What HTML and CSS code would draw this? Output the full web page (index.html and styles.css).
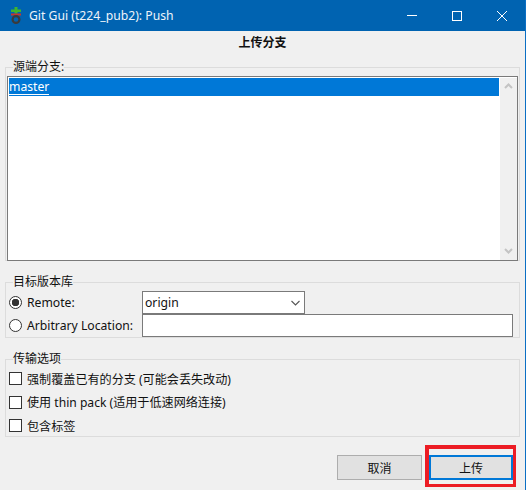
FILE: index.html
```html
<!DOCTYPE html>
<html lang="zh-CN">
  <head>
    <meta charset="UTF-8" />
    <title>Git Gui (t224_pub2): Push</title>
    <link rel="stylesheet" href="styles.css">
  </head>
  <body>
    <div class="window">
      <!-- 标题栏 -->
      <header class="titlebar">
        <svg class="app-icon" width="12" height="17" viewBox="0 0 12 17">
          <path d="M4.500 0h3v2.500H11v2.500H7.500v1.500h-3V5H1V2.500h3.500z" fill="#3fb52c"/>
          <rect x="1" y="6.500" width="10" height="2" fill="#c8352b"/>
          <circle cx="6" cy="12.500" r="3.400" fill="none" stroke="#3b3b3b" stroke-width="2.200"/>
        </svg>
        <span class="title-text">Git Gui (t224_pub2): Push</span>
        <div class="win-controls">
          <svg width="12" height="12" viewBox="0 0 12 12"><path d="M1 5.500h10" stroke="#fff" fill="none"/></svg>
          <svg width="12" height="12" viewBox="0 0 12 12"><rect x="1.500" y="1.500" width="9" height="9" stroke="#fff" fill="none"/></svg>
          <svg width="12" height="12" viewBox="0 0 12 12"><path d="M1 1l10 10M11 1L1 11" stroke="#fff" fill="none"/></svg>
        </div>
      </header>

      <main class="content">
        <h1 class="heading">上传分支</h1>

        <!-- 源端分支 -->
        <fieldset class="group group-source">
          <legend>源端分支:</legend>
          <div class="listbox">
            <div class="list-items">
              <div class="list-row selected"><span>master</span></div>
            </div>
            <div class="scrollbar">
              <svg width="9" height="6" viewBox="0 0 9 6"><path d="M1 5l3.500-3.500L8 5" fill="none" stroke="#c4c4c4" stroke-width="2"/></svg>
              <svg width="9" height="6" viewBox="0 0 9 6"><path d="M1 1l3.500 3.500L8 1" fill="none" stroke="#c4c4c4" stroke-width="2"/></svg>
            </div>
          </div>
        </fieldset>

        <!-- 目标版本库 -->
        <fieldset class="group group-target">
          <legend>目标版本库</legend>
          <div class="target-row">
            <label class="option latin"><span class="radio checked"></span>Remote:</label>
            <div class="field combo">
              <span>origin</span>
              <svg width="9" height="6" viewBox="0 0 9 6"><path d="M.5 1l4 4 4-4" fill="none" stroke="#555" stroke-width="1.100"/></svg>
            </div>
          </div>
          <div class="target-row">
            <label class="option latin"><span class="radio"></span>Arbitrary Location:</label>
            <div class="field entry"></div>
          </div>
        </fieldset>

        <!-- 传输选项 -->
        <fieldset class="group group-options">
          <legend>传输选项</legend>
          <label class="option"><span class="checkbox"></span>强制覆盖已有的分支 (可能会丢失改动)</label>
          <label class="option"><span class="checkbox"></span>使用 thin pack (适用于低速网络连接)</label>
          <label class="option"><span class="checkbox"></span>包含标签</label>
        </fieldset>

        <div class="actions">
          <button class="btn" type="button">取消</button>
          <button class="btn primary" type="button">上传</button>
        </div>
      </main>
    </div>
  </body>
</html>
```

FILE: styles.css
```css
:root {
  --titlebar: #0063b1;
  --selection: #0078d7;
  --background: #f0f0f0;
  --field-border: #7a7a7a;
  --group-border: #dcdcdc;
}

* {
  margin: 0;
  padding: 0;
  box-sizing: border-box;
  font-family: "Noto Sans", "Noto Sans CJK SC", sans-serif;
}

body {
  width: 526px;
  height: 490px;
  overflow: hidden;
  background: var(--background);
  color: #111;
  font-size: 12.1px;
}

.window {
  height: 490px;
  display: flex;
  flex-direction: column;
  border-right: 1px solid #0b6fc4;
}

/* 标题栏 */
.titlebar {
  height: 31px;
  flex: none;
  display: flex;
  align-items: center;
  padding-left: 10px;
  background: var(--titlebar);
  color: #fff;
}

.app-icon {
  margin-right: 7px;
}

.title-text {
  font-size: 12.2px;
  color: #eef4fa;
}

.win-controls {
  margin-left: auto;
  display: flex;
  gap: 33px;
  padding-right: 17px;
}

.content {
  flex: 1;
  position: relative;
  padding: 0 5px;
  display: flex;
  flex-direction: column;
}

.heading {
  height: 22px;
  margin-top: 1px;
  line-height: 22px;
  text-align: center;
  font-size: 12px;
  font-weight: 700;
}

/* 分组框 */
.group {
  border: 1px solid var(--group-border);
  padding: 0 1px;
  min-width: 0;
}

.group legend {
  margin-left: 4px;
  line-height: 14px;
  font-size: 12px;
  padding: 0;
}

.group-source {
  height: 201px;
  margin-top: 6px;
}

.group-source legend {
  margin-left: 6px;
}

.listbox {
  height: 185px;
  margin-top: 2px;
  display: flex;
  background: #fff;
  border: 1px solid var(--field-border);
  padding: 1px;
}

.list-items {
  flex: 1;
}

.list-row {
  height: 18px;
  line-height: 17px;
  background: var(--selection);
  color: #fff;
  font-size: 12.2px;
}

.list-row span {
  display: inline-block;
  height: 17px;
  border-bottom: 1px solid #fff;
}

.scrollbar {
  width: 17px;
  background: #f0f0f0;
  display: flex;
  flex-direction: column;
  align-items: center;
  justify-content: space-between;
  padding: 5px 0 6px;
  margin: 0 -1px -1px 1px;
}

.group-target {
  height: 63px;
  margin-top: 14px;
  padding: 2px 6px 0 3px;
}

.target-row {
  height: 23px;
  display: flex;
  align-items: center;
  justify-content: space-between;
}

.option {
  display: flex;
  align-items: center;
  gap: 5px;
}

.option.latin {
  font-size: 12.2px;
}

.radio {
  width: 13px;
  height: 13px;
  border: 1px solid #333;
  border-radius: 50%;
  background: #fff;
}

.radio.checked {
  background: radial-gradient(circle, #333 0 3.500px, #fff 4px);
}

.field {
  height: 23px;
  background: #fff;
  border: 1px solid var(--field-border);
}

.combo {
  width: 163px;
  margin-right: 208px;
  display: flex;
  align-items: center;
  justify-content: space-between;
  padding: 0 4px 0 2px;
  font-size: 12.2px;
}

.entry {
  width: 371px;
}

.group-options {
  height: 85px;
  margin-top: 14px;
  padding: 1px 3px 0;
  display: flex;
  flex-direction: column;
}

.group-options .option {
  height: 23.500px;
}

.checkbox {
  width: 13px;
  height: 13px;
  border: 1px solid #333;
  background: #fff;
}

/* 按钮 */
.actions {
  display: flex;
  justify-content: flex-end;
  gap: 7px;
  margin-top: 18px;
  padding-right: 7px;
}

.btn {
  width: 85px;
  height: 25px;
  border: 1px solid #adadad;
  background: #e1e1e1;
  font-size: 12px;
  color: #111;
}

.btn.primary {
  position: relative;
  width: 84px;
  border: 2px solid var(--selection);
}

/* 截图上的红色标注框 */
.btn.primary::after {
  content: "";
  box-sizing: border-box;
  position: absolute;
  left: -6px;
  top: -12px;
  width: 91px;
  height: 42px;
  border: solid #ec1c24;
  border-width: 4px 3px 3px 4px;
}
```
